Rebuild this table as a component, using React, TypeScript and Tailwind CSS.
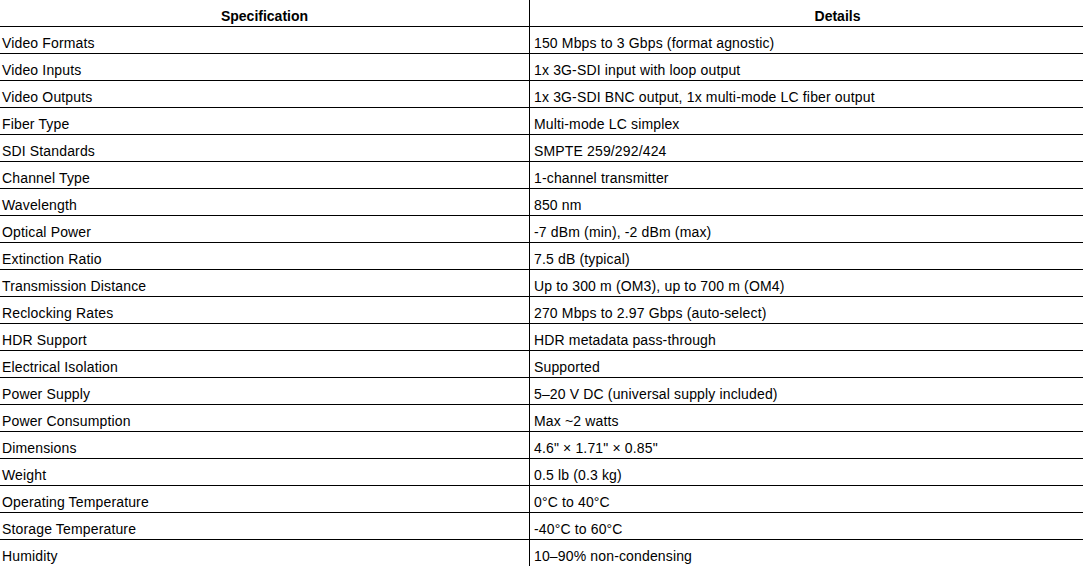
const rows: [string, string][] = [
  ["Video Formats", "150 Mbps to 3 Gbps (format agnostic)"],
  ["Video Inputs", "1x 3G-SDI input with loop output"],
  ["Video Outputs", "1x 3G-SDI BNC output, 1x multi-mode LC fiber output"],
  ["Fiber Type", "Multi-mode LC simplex"],
  ["SDI Standards", "SMPTE 259/292/424"],
  ["Channel Type", "1-channel transmitter"],
  ["Wavelength", "850 nm"],
  ["Optical Power", "-7 dBm (min), -2 dBm (max)"],
  ["Extinction Ratio", "7.5 dB (typical)"],
  ["Transmission Distance", "Up to 300 m (OM3), up to 700 m (OM4)"],
  ["Reclocking Rates", "270 Mbps to 2.97 Gbps (auto-select)"],
  ["HDR Support", "HDR metadata pass-through"],
  ["Electrical Isolation", "Supported"],
  ["Power Supply", "5–20 V DC (universal supply included)"],
  ["Power Consumption", "Max ~2 watts"],
  ["Dimensions", "4.6\" × 1.71\" × 0.85\""],
  ["Weight", "0.5 lb (0.3 kg)"],
  ["Operating Temperature", "0°C to 40°C"],
  ["Storage Temperature", "-40°C to 60°C"],
  ["Humidity", "10–90% non-condensing"],
];

export default function App() {
  return (
    <div
      className="w-[1083px] h-[566px] overflow-hidden bg-white text-black text-[14px] leading-[16px]"
      style={{ fontFamily: '"Liberation Sans", Arial, sans-serif' }}
    >
      <div className="w-[1145px]">
        <div className="grid grid-cols-[530px_1fr] border-b border-black">
          <div className="h-[26px] pt-[8px] border-r border-black text-center font-bold">
            Specification
          </div>
          <div className="h-[26px] pt-[8px] text-center font-bold">Details</div>
        </div>
        {rows.map(([spec, detail]) => (
          <div
            key={spec}
            className="grid grid-cols-[530px_1fr] border-b border-black tracking-[0.15px]"
          >
            <div className="h-[26px] pt-[8px] px-[2px] border-r border-black whitespace-nowrap">
              {spec}
            </div>
            <div className="h-[26px] pt-[8px] px-[4px] whitespace-nowrap">{detail}</div>
          </div>
        ))}
      </div>
    </div>
  );
}
